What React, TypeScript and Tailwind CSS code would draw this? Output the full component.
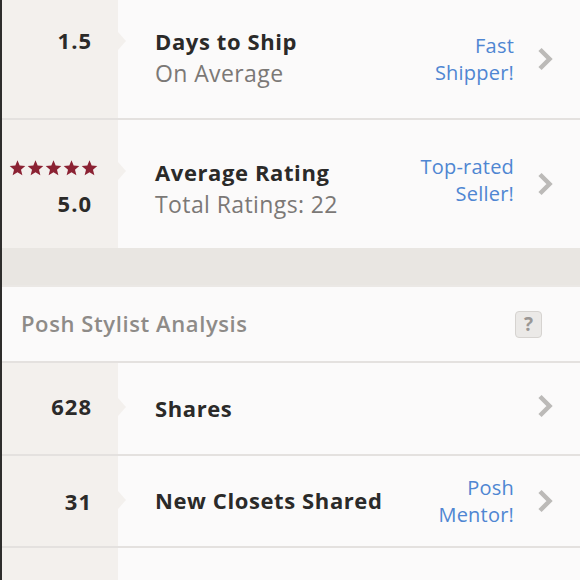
import * as React from "react"

const Chevron = () => (
  <svg width="20" height="26" viewBox="0 0 20 26" className="shrink-0">
    <path d="M4 3.5 L13.5 13 L4 22.5" fill="none" stroke="#bcbab8" strokeWidth="4.5" />
  </svg>
)

const Star = () => (
  <svg width="17" height="16" viewBox="0 0 24 23">
    <path
      d="M12 0.5 L15.1 8 L23.2 8.6 L17 13.9 L19 21.8 L12 17.5 L5 21.8 L7 13.9 L0.8 8.6 L8.9 8 Z"
      fill="#8b2233"
    />
  </svg>
)

type RowProps = {
  height: string
  left?: React.ReactNode
  title?: string
  sub?: string
  badge?: [string, string]
  notchTop: string
  chevronClass?: string
  textClass?: string
}

function StatRow({ height, left, title, sub, badge, notchTop, chevronClass = "", textClass = "" }: RowProps) {
  return (
    <div className={`flex ${height} shrink-0 border-b-2 border-[#e4e1df]`}>
      <div className="relative flex w-[116px] shrink-0 flex-col items-end justify-center bg-[#f3f0ed] pr-[26px]">
        {left}
        <div
          className={`absolute right-[-8px] ${notchTop} h-0 w-0 border-y-[9px] border-l-[8px] border-y-transparent border-l-[#f3f0ed]`}
        />
      </div>
      <div className="flex flex-1 items-center pl-[37px] pr-[24px]">
        <div className={`flex-1 ${textClass}`}>
          {title && (
            <div className="text-[22px] font-bold leading-[32px] tracking-[0.6px] text-[#2b2a29]">{title}</div>
          )}
          {sub && <div className="text-[23px] leading-[32px] tracking-[0.4px] text-[#7b7876]">{sub}</div>}
        </div>
        {badge && (
          <div className="mr-[22px] text-right text-[20px] leading-[27px] tracking-[0.2px] text-[#4f86d2]">
            <div>{badge[0]}</div>
            <div>{badge[1]}</div>
          </div>
        )}
        <div className={chevronClass}>
          <Chevron />
        </div>
      </div>
    </div>
  )
}

const num = "text-[22px] font-bold tracking-[1px] text-[#2b2a29]"

export default function App() {
  return (
    <div
      className="flex h-[580px] w-[580px] flex-col overflow-hidden border-l-2 border-[#2e2d2c] bg-[#fbfafa]"
      style={{ fontFamily: "'Open Sans', 'Liberation Sans', sans-serif" }}
    >
      <StatRow
        height="h-[120px]"
        notchTop="top-[32px]"
        left={<div className={`mt-[-38px] ${num}`}>1.5</div>}
        title="Days to Ship"
        sub="On Average"
        badge={["Fast", "Shipper!"]}
        textClass="mt-[-4px]"
      />
      <div className="flex h-[128px] shrink-0">
        <div className="relative flex w-[116px] shrink-0 flex-col items-end bg-[#f3f0ed] pr-[20px] pt-[40px]">
          <div className="flex gap-[1px]">
            <Star />
            <Star />
            <Star />
            <Star />
            <Star />
          </div>
          <div className={`mt-[12px] pr-[6px] leading-[30px] ${num}`}>5.0</div>
          <div className="absolute right-[-8px] top-[42px] h-0 w-0 border-y-[9px] border-l-[8px] border-y-transparent border-l-[#f3f0ed]" />
        </div>
        <div className="flex flex-1 items-center pl-[37px] pr-[24px]">
          <div className="mt-[8px] flex-1">
            <div className="text-[22px] font-bold leading-[32px] tracking-[0.6px] text-[#2b2a29]">Average Rating</div>
            <div className="text-[23px] leading-[32px] tracking-[0.4px] text-[#7b7876]">Total Ratings: 22</div>
          </div>
          <div className="mr-[22px] mt-[-8px] text-right text-[20px] leading-[27px] tracking-[0.2px] text-[#4f86d2]">
            <div>Top-rated</div>
            <div>Seller!</div>
          </div>
          <Chevron />
        </div>
      </div>
      <div className="h-[39px] shrink-0 border-b-2 border-[#ebe8e5] bg-[#e9e6e2]" />
      <div className="flex h-[76px] shrink-0 items-center justify-between border-b-2 border-[#e4e1df] pl-[19px] pr-[38px]">
        <div className="mt-[-1px] text-[22px] font-semibold tracking-[0.6px] text-[#8e8b88]">Posh Stylist Analysis</div>
        <div className="flex h-[27px] w-[27px] items-center justify-center rounded-[4px] border border-[#d6d3d0] bg-[#ebe9e7] text-[19px] font-bold text-[#9a9795]">
          ?
        </div>
      </div>
      <StatRow
        height="h-[93px]"
        notchTop="top-[35px]"
        left={<div className={`mt-[-4px] ${num}`}>628</div>}
        title="Shares"
        chevronClass="mt-[-6px]"
        textClass="mt-[-2px]"
      />
      <StatRow
        height="h-[92px]"
        notchTop="top-[35px]"
        left={<div className={num}>31</div>}
        title="New Closets Shared"
        badge={["Posh", "Mentor!"]}
        textClass="mt-[-2px]"
      />
      <StatRow height="h-[93px]" notchTop="top-[35px]" chevronClass="mt-[-6px]" />
    </div>
  )
}
